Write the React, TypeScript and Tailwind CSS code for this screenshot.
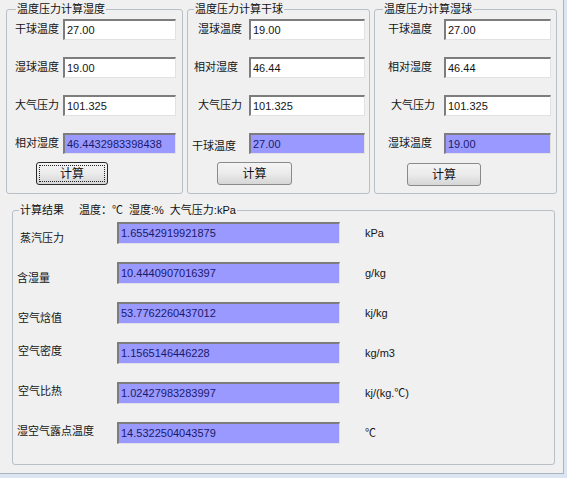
import React from 'react';

type Row = { label: string; value: string; out?: boolean; pad: string };

const Box = ({ value, out, width, tall }: { value: string; out?: boolean; width: string; tall?: boolean }) => (
    <div
        className={`${width} ${tall ? 'h-[22px]' : 'h-[21px]'} shrink-0 border-t-2 border-l-2 border-r border-b border-t-[#7d7d7d] border-l-[#7d7d7d] border-r-[#e2e2e2] border-b-[#e2e2e2] pl-[2px] leading-[18px] whitespace-nowrap overflow-hidden ${out ? 'bg-[#9999ff] text-[#1a1a6a]' : 'bg-white text-[#141414]'}`}
    >
        {value}
    </div>
);

const Button = ({ margin, width, focused }: { margin: string; width: string; focused?: boolean }) => (
    <button
        className={`${margin} ${width} h-[23px] rounded-[3px] border bg-gradient-to-b from-[#f4f4f4] via-[#ebebeb] to-[#d6d6d6] text-[12px] text-[#111] ${focused ? 'border-[#2b2b2b] outline-1 outline-dotted outline-[#222] -outline-offset-4' : 'border-[#8a8a8a]'}`}
    >
        计算
    </button>
);

const Group = ({ title, className, legend, children }: { title: React.ReactNode; className: string; legend: string; children: React.ReactNode }) => (
    <fieldset className={`border border-[#b8bfc6] rounded-[3px] shrink-0 ${className}`}>
        <legend className={`px-[1px] leading-[14px] text-[#111] ${legend}`}>{title}</legend>
        {children}
    </fieldset>
);

const InputGroup = ({ rows, labelW, boxW }: { rows: Row[]; labelW: string; boxW: string }) => (
    <div className="flex flex-col gap-[17px] pt-[3px]">
        {rows.map(r => (
            <div key={r.label} className="flex items-center h-[21px]">
                <span className={`${labelW} ${r.pad} shrink-0 whitespace-nowrap`}>{r.label}</span>
                <Box value={r.value} out={r.out} width={boxW} />
            </div>
        ))}
    </div>
);

const results = [
    { label: '蒸汽压力', value: '1.65542919921875', unit: 'kPa', pad: 'pl-[7px] pt-[10px]' },
    { label: '含湿量', value: '10.4440907016397', unit: 'g/kg', pad: 'pl-[4px] pt-[10px]' },
    { label: '空气焓值', value: '53.7762260437012', unit: 'kj/kg', pad: 'pl-[5px] pt-[10px]' },
    { label: '空气密度', value: '1.1565146446228', unit: 'kg/m3', pad: 'pl-[5px] pb-[3px]' },
    { label: '空气比热', value: '1.02427983283997', unit: 'kj/(kg.℃)', pad: 'pl-[5px] pb-[3px]' },
    { label: '湿空气露点温度', value: '14.5322504043579', unit: '℃', pad: 'pl-[4px] pb-[3px]' },
];

export default function App() {
    return (
        <div className="w-[567px] h-[478px] bg-[#dbe6f2] font-['Liberation_Sans','Noto_Sans_CJK_SC',sans-serif] text-[11px] text-[#151515]">
            <div className="w-[564px] h-[474px] bg-[#f0f0f0] border-r border-b border-[#aab4bf] flex flex-col">
                <div className="flex items-start mt-[2px]">
                    <Group title="温度压力计算湿度" className="ml-[6px] w-[177px] h-[192px]" legend="ml-[9px]">
                        <div className="pl-[8px] flex flex-col">
                            <InputGroup
                                labelW="w-[48px]"
                                boxW="w-[113px]"
                                rows={[
                                    { label: '干球温度', value: '27.00', pad: '' },
                                    { label: '湿球温度', value: '19.00', pad: '' },
                                    { label: '大气压力', value: '101.325', pad: '' },
                                    { label: '相对湿度', value: '46.4432983398438', out: true, pad: '' },
                                ]}
                            />
                            <Button margin="ml-[21px] mt-[8px]" width="w-[72px]" focused />
                        </div>
                    </Group>
                    <Group title="温度压力计算干球" className="ml-[4px] w-[183px] h-[192px]" legend="ml-[6px]">
                        <div className="flex flex-col">
                            <InputGroup
                                labelW="w-[61px]"
                                boxW="w-[116px]"
                                rows={[
                                    { label: '湿球温度', value: '19.00', pad: 'pl-[10px]' },
                                    { label: '相对湿度', value: '46.44', pad: 'pl-[6px]' },
                                    { label: '大气压力', value: '101.325', pad: 'pl-[10px]' },
                                    { label: '干球温度', value: '27.00', out: true, pad: 'pl-[4px] pt-[5px]' },
                                ]}
                            />
                            <Button margin="ml-[29px] mt-[8px]" width="w-[75px]" />
                        </div>
                    </Group>
                    <Group title="温度压力计算湿球" className="ml-[4px] w-[183px] h-[192px]" legend="ml-[8px]">
                        <div className="flex flex-col">
                            <InputGroup
                                labelW="w-[69px]"
                                boxW="w-[107px]"
                                rows={[
                                    { label: '干球温度', value: '27.00', pad: 'pl-[13px]' },
                                    { label: '相对湿度', value: '46.44', pad: 'pl-[13px]' },
                                    { label: '大气压力', value: '101.325', pad: 'pl-[16px]' },
                                    { label: '湿球温度', value: '19.00', out: true, pad: 'pl-[13px]' },
                                ]}
                            />
                            <Button margin="ml-[32px] mt-[9px]" width="w-[74px]" />
                        </div>
                    </Group>
                </div>
                <Group
                    title={
                        <>
                            <span>计算结果</span>
                            <span className="ml-[15px]">温度：℃</span>
                            <span className="ml-[6px]">湿度:%</span>
                            <span className="ml-[6px]">大气压力:kPa</span>
                        </>
                    }
                    className="ml-[12px] mt-[9px] w-[543px] h-[262px]"
                    legend="ml-[6px] whitespace-nowrap"
                >
                    <div className="flex flex-col gap-[18px] pt-[5px]">
                        {results.map(r => (
                            <div key={r.label} className="flex items-center h-[22px]">
                                <span className={`w-[104px] shrink-0 whitespace-nowrap ${r.pad}`}>{r.label}</span>
                                <Box value={r.value} out width="w-[223px]" tall />
                                <span className="ml-[25px] whitespace-nowrap">{r.unit}</span>
                            </div>
                        ))}
                    </div>
                </Group>
            </div>
        </div>
    );
}
